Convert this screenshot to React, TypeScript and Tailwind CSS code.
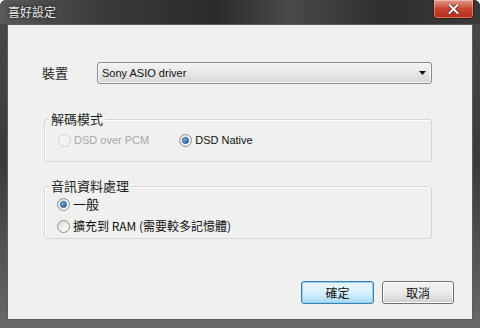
import React from "react";

const cjk = { fontFamily: '"Noto Sans CJK TC", "Liberation Sans", sans-serif' };
const latin = { fontFamily: '"Liberation Sans", "Noto Sans CJK TC", sans-serif' };

function Radio({ checked, disabled }: { checked?: boolean; disabled?: boolean }) {
  return (
    <span
      className={`flex h-[13px] w-[13px] shrink-0 items-center justify-center rounded-full border ${
        disabled ? "border-[#cfcfcf] bg-[#f4f4f4]" : "border-[#8e8f8f] bg-gradient-to-br from-[#dcdcdc] to-[#ffffff]"
      }`}
    >
      {checked && (
        <span className="h-[7px] w-[7px] rounded-full border border-[#1a4f82] bg-gradient-to-br from-[#8fc8f0] to-[#1c5d9c]" />
      )}
    </span>
  );
}

function Group({ label, children, h }: { label: string; children: React.ReactNode; h: string }) {
  return (
    <div className={`relative ml-[36px] w-[388px] rounded-[3px] border border-[#d5d5d5] shadow-[inset_1px_1px_0_#ffffff] ${h}`}>
      <span className="absolute -top-[10px] left-[4px] bg-[#f0f0f0] px-[2px] text-[13px] leading-[18px] text-[#1e1e1e]" style={cjk}>
        {label}
      </span>
      {children}
    </div>
  );
}

export default function App() {
  return (
    <div className="flex h-[328px] w-[480px] flex-col overflow-hidden rounded-t-[6px] bg-gradient-to-b from-[#4a4a4a] via-[#3a3a3a] to-[#6a6a6a]">
      {/* title bar */}
      <div className="flex h-[24px] shrink-0 items-start justify-between bg-[linear-gradient(90deg,#5a5a5a_0%,#3c3c3c_20%,#2a2a2a_45%,#4a4a4a_60%,#2e2e2e_80%,#3a3a3a_100%)]">
        <span className="ml-[8px] mt-[4px] text-[12px] leading-[16px] text-[#e8e8e8] [text-shadow:0_0_4px_#000]" style={cjk}>
          喜好設定
        </span>
        <div className="mr-[6px] flex h-[19px] w-[41px] items-center justify-center rounded-b-[4px] border border-t-0 border-[#3a1a14] bg-gradient-to-b from-[#e39a8c] via-[#c6432f] to-[#b52b17] shadow-[inset_0_0_0_1px_rgba(255,255,255,0.35)]">
          <svg width="11" height="10" viewBox="0 0 11 10">
            <path d="M1.5 1 L9.5 9 M9.5 1 L1.5 9" stroke="#5a1a10" strokeWidth="3.4" strokeLinecap="square" />
            <path d="M1.5 1 L9.5 9 M9.5 1 L1.5 9" stroke="#ffffff" strokeWidth="2" strokeLinecap="square" />
          </svg>
        </div>
      </div>

      {/* client area */}
      <div className="mx-[7px] flex h-[296px] shrink-0 flex-col border border-[#5c5c5c] bg-[#f0f0f0]">
        <div className="ml-[34px] mt-[37px] flex h-[22px] items-center">
          <span className="w-[55px] text-[13px] text-[#1e1e1e]" style={cjk}>
            裝置
          </span>
          <div className="flex h-[22px] w-[335px] items-center justify-between rounded-[3px] border border-[#8a8a8a] bg-gradient-to-b from-[#f3f3f3] via-[#e8e8e8] to-[#d6d6d6] pl-[4px] pr-[5px] shadow-[inset_0_0_0_1px_#fafafa]">
            <span className="text-[11px] text-[#111]" style={latin}>
              Sony ASIO driver
            </span>
            <svg width="7" height="4" viewBox="0 0 7 4">
              <path d="M0 0 H7 L3.5 4 Z" fill="#111" />
            </svg>
          </div>
        </div>

        <div className="mt-[35px]">
          <Group label="解碼模式" h="h-[43px]">
            <div className="mt-[12px] flex items-center">
              <div className="ml-[13px] flex items-center gap-[3px]">
                <Radio disabled />
                <span className="text-[11px] text-[#a8a8a8]" style={latin}>
                  DSD over PCM
                </span>
              </div>
              <div className="ml-[30px] flex items-center gap-[3px]">
                <Radio checked />
                <span className="text-[11px] text-[#111]" style={latin}>
                  DSD Native
                </span>
              </div>
            </div>
          </Group>
        </div>

        <div className="mt-[24px]">
          <Group label="音訊資料處理" h="h-[53px]">
            <div className="ml-[12px] mt-[9px] flex items-center gap-[3px]">
              <Radio checked />
              <span className="text-[13px] leading-[16px] text-[#111]" style={cjk}>
                一般
              </span>
            </div>
            <div className="ml-[12px] mt-[6px] flex items-center gap-[3px]">
              <Radio />
              <span className="text-[12px] leading-[16px] text-[#111]" style={cjk}>
                擴充到 RAM (需要較多記憶體)
              </span>
            </div>
          </Group>
        </div>

        <div className="mt-auto mb-[15px] mr-[18px] flex justify-end gap-[8px]">
          <button className="flex h-[23px] w-[73px] items-center justify-center rounded-[3px] border border-[#3c7fb1] bg-gradient-to-b from-[#eaf6fd] via-[#d9f0fc] to-[#a7d9f5] text-[12px] text-[#111] shadow-[inset_0_0_0_1px_#8ed1f3]" style={cjk}>
            確定
          </button>
          <button className="flex h-[23px] w-[72px] items-center justify-center rounded-[3px] border border-[#707070] bg-gradient-to-b from-[#f2f2f2] via-[#ebebeb] to-[#cfcfcf] text-[12px] text-[#111] shadow-[inset_0_0_0_1px_#fcfcfc]" style={cjk}>
            取消
          </button>
        </div>
      </div>
      <div className="flex-1" />
    </div>
  );
}
